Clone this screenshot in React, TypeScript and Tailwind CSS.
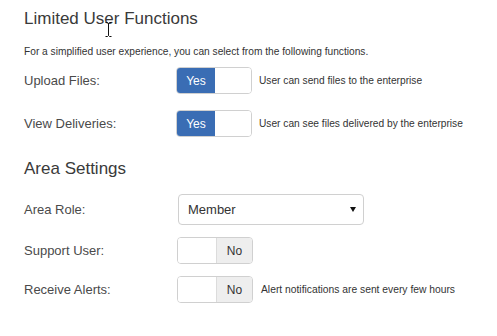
import React from "react";

function ToggleYes() {
  return (
    <div className="flex h-[27px] w-[76px] overflow-hidden rounded-[4px] border border-[#d0d0d0] bg-white">
      <div className="flex w-[38px] items-center justify-center bg-[#3a6db4] text-[12px] font-medium text-white">Yes</div>
      <div className="flex-1 bg-white" />
    </div>
  );
}

function ToggleNo() {
  return (
    <div className="flex h-[27px] w-[76px] overflow-hidden rounded-[4px] border border-[#d0d0d0] bg-white">
      <div className="w-[38px] bg-white" />
      <div className="flex flex-1 items-center justify-center border-l border-[#dcdcdc] bg-[#eeeeee] text-[12px] text-[#333]">No</div>
    </div>
  );
}

export default function App() {
  return (
    <div className="relative h-[336px] w-[497px] bg-white pl-[24px] pt-[9px] text-[#4a4a4a]" style={{ fontFamily: '"Liberation Sans", Arial, sans-serif' }}>
      <div className="h-[20px] text-[17px] leading-[20px] text-[#3a3a3a]">Limited User Functions</div>
      <div className="mt-[16px] h-[14px] text-[10.2px] leading-[14px] text-[#333]">For a simplified user experience, you can select from the following functions.</div>

      <div className="mt-[8px] flex h-[27px] items-center">
        <div className="w-[152px] text-[13px]">Upload Files:</div>
        <ToggleYes />
        <div className="ml-[7px] text-[10.2px] text-[#333]">User can send files to the enterprise</div>
      </div>

      <div className="mt-[16px] flex h-[27px] items-center">
        <div className="w-[152px] text-[13px]">View Deliveries:</div>
        <ToggleYes />
        <div className="ml-[7px] text-[10.2px] text-[#333]">User can see files delivered by the enterprise</div>
      </div>

      <div className="mt-[22px] h-[20px] text-[17px] leading-[20px] text-[#3a3a3a]">Area Settings</div>

      <div className="mt-[15px] flex h-[31px] items-center">
        <div className="w-[154px] text-[13px]">Area Role:</div>
        <div className="flex h-[31px] w-[186px] items-center justify-between rounded-[4px] border border-[#d0d0d0] bg-white pl-[9px] pr-[7px] text-[13px] text-[#333]">
          <span>Member</span>
          <svg width="6" height="5" viewBox="0 0 6 5"><path d="M0 0 H6 L3 5 Z" fill="#111" /></svg>
        </div>
      </div>

      <div className="mt-[12px] flex h-[27px] items-center">
        <div className="w-[153px] text-[13px]">Support User:</div>
        <ToggleNo />
      </div>

      <div className="mt-[12px] flex h-[27px] items-center">
        <div className="w-[153px] text-[13px]">Receive Alerts:</div>
        <ToggleNo />
        <div className="ml-[8px] text-[10.3px] text-[#333]">Alert notifications are sent every few hours</div>
      </div>

      <svg className="absolute left-[105px] top-[22px]" width="7" height="15" viewBox="0 0 7 15">
        <path d="M0.5 0.5 H2.5 L3.5 1.5 L4.5 0.5 H6.5 M3.5 1.5 V13.5 M0.5 14.5 H2.5 L3.5 13.5 L4.5 14.5 H6.5" stroke="#111" strokeWidth="1" fill="none" />
      </svg>
    </div>
  );
}
